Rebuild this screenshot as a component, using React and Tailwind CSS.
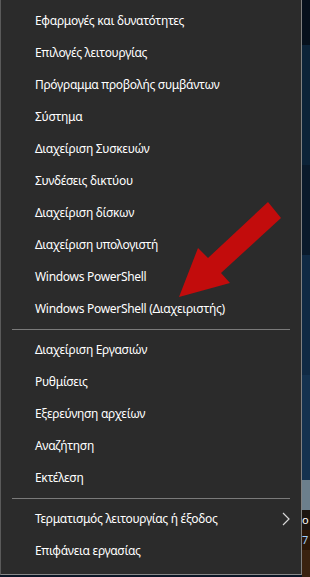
import React from "react";

const group1 = [
  "Εφαρμογές και δυνατότητες",
  "Επιλογές λειτουργίας",
  "Πρόγραμμα προβολής συμβάντων",
  "Σύστημα",
  "Διαχείριση Συσκευών",
  "Συνδέσεις δικτύου",
  "Διαχείριση δίσκων",
  "Διαχείριση υπολογιστή",
  "Windows PowerShell",
  "Windows PowerShell (Διαχειριστής)",
];
const group2 = [
  "Διαχείριση Εργασιών",
  "Ρυθμίσεις",
  "Εξερεύνηση αρχείων",
  "Αναζήτηση",
  "Εκτέλεση",
];

function Item({ children, chevron }) {
  return (
    <div className="h-[32px] flex items-center pl-[34px] pr-[10px] text-[12px] tracking-[-0.3px] text-white justify-between">
      <span>{children}</span>
      {chevron && (
        <svg width="8" height="14" viewBox="0 0 8 14" className="mr-[1px]">
          <path d="M1 1 L7 7 L1 13" fill="none" stroke="#d8d8d8" strokeWidth="1.2" />
        </svg>
      )}
    </div>
  );
}

function Sep() {
  return (
    <div className="h-[9px] flex items-center px-[11px]">
      <div className="h-px w-full bg-[#7a7a7a]" />
    </div>
  );
}

export default function App() {
  return (
    <div
      className="relative flex w-[310px] h-[577px] bg-[#0a1626] overflow-hidden"
      style={{ fontFamily: '"Noto Sans", "Open Sans", sans-serif' }}
    >
      <div className="relative w-[302px] h-[575px] bg-[#2b2b2b] border-l border-l-[#5a5a5a] border-r border-r-[#808080] border-b border-b-[#8a8a8a] pt-[5px] shrink-0">
        {group1.map((t) => (
          <Item key={t}>{t}</Item>
        ))}
        <Sep />
        {group2.map((t) => (
          <Item key={t}>{t}</Item>
        ))}
        <Sep />
        <Item chevron>Τερματισμός λειτουργίας ή έξοδος</Item>
        <Item>Επιφάνεια εργασίας</Item>
        <svg
          className="absolute left-0 top-0 pointer-events-none"
          width="302"
          height="575"
        >
          <polygon
            points="178,297 197,248 207,258 267,202 280,218 220,273 229,283"
            fill="#c20c0c"
          />
        </svg>
      </div>
      <div className="flex-1 flex flex-col h-full">
        <div className="h-[45px] bg-[#06101c]" />
        <div className="h-[120px] bg-[#0c2338]" />
        <div className="h-[90px] bg-[#0a1a2b]" />
        <div className="h-[120px] bg-[#102a44]" />
        <div className="h-[105px] bg-[#14324f]" />
        <div className="h-[30px] bg-[#6c7f8c]" />
        <div className="h-[20px] bg-[#1c1410] text-[11px] leading-[20px] text-white">o</div>
        <div className="h-[20px] bg-[#2a1608] text-[11px] leading-[20px] text-[#9fd0ff]">7</div>
        <div className="flex-1 bg-[#3a2210]" />
      </div>
    </div>
  );
}
